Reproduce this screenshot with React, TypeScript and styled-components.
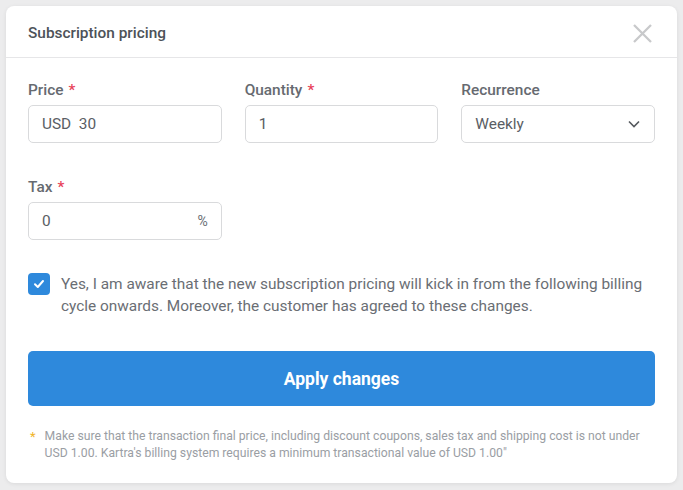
import * as React from 'react';
import styled, { createGlobalStyle } from 'styled-components';

const GlobalStyle = createGlobalStyle`
  html, body {
    margin: 0;
    padding: 0;
    background: #ececed;
    font-family: Roboto, "Liberation Sans", Arial, sans-serif;
  }
  * {
    box-sizing: border-box;
  }
`;

const Page = styled.div`
  width: 683px;
  height: 490px;
  padding: 6px;
`;

const Modal = styled.div`
  width: 671px;
  height: 477px;
  background: #fff;
  border-radius: 8px;
  box-shadow: 0 1px 4px rgba(0, 0, 0, 0.08);
  display: flex;
  flex-direction: column;
`;

const Header = styled.div`
  height: 52px;
  padding: 3px 22px 0;
  display: flex;
  align-items: center;
  justify-content: space-between;
  border-bottom: 1px solid #e6e6e8;
`;

const Title = styled.h2`
  margin: 0;
  font-size: 15.4px;
  font-weight: 500;
  color: #4d5258;
`;

const CloseButton = styled.button`
  border: 0;
  background: none;
  padding: 0;
  width: 19px;
  height: 19px;
  margin-right: 3px;
  color: #c8c9cb;
  cursor: pointer;
  display: flex;
  align-items: center;
  justify-content: center;
`;

const Body = styled.div`
  padding: 23px 22px 0;
`;

const Grid = styled.div`
  display: grid;
  grid-template-columns: repeat(3, 1fr);
  column-gap: 23px;
  row-gap: 35px;
`;

const Field = styled.div`
  display: flex;
  flex-direction: column;
`;

const Label = styled.label`
  font-size: 15.4px;
  font-weight: 500;
  color: #666a70;
  height: 18px;
  line-height: 18px;
  margin-bottom: 6px;
`;

const Required = styled.span`
  color: #e8435a;
  margin-left: 5px;
`;

const InputBox = styled.div`
  height: 38px;
  border: 1px solid #d9dadc;
  border-radius: 5px;
  padding: 0 13px;
  display: flex;
  align-items: center;
  justify-content: space-between;
  font-size: 15.4px;
  color: #5a5e64;
`;

const Suffix = styled.span`
  color: #6a6e73;
  font-size: 14px;
`;

const Check = styled.label`
  display: flex;
  align-items: flex-start;
  gap: 11px;
  margin-top: 33px;
  font-size: 15.4px;
  line-height: 22px;
  color: #6a6e74;
`;

const Box = styled.span`
  flex: 0 0 22px;
  width: 22px;
  height: 22px;
  border-radius: 4px;
  background: #2e89dc;
  display: flex;
  align-items: center;
  justify-content: center;
`;

const ApplyButton = styled.button`
  width: 100%;
  height: 55px;
  margin-top: 34px;
  border: 0;
  border-radius: 5px;
  background: #2e89dc;
  color: #fff;
  font-family: inherit;
  font-size: 17.5px;
  font-weight: 700;
  cursor: pointer;
`;

const Note = styled.div`
  display: flex;
  gap: 9px;
  margin-top: 22px;
  font-size: 12.2px;
  line-height: 17px;
  color: #9a9ea4;
`;

const Star = styled.span`
  color: #f0b429;
  font-size: 13px;
  padding-left: 2px;
`;

export default function App() {
  return (
    <Page>
      <GlobalStyle />
      <Modal>
        <Header>
          <Title>Subscription pricing</Title>
          <CloseButton aria-label="Close">
            <svg width="19" height="19" viewBox="0 0 19 19" fill="none" stroke="currentColor" strokeWidth="2.3">
              <path d="M1 1 L18 18 M18 1 L1 18" />
            </svg>
          </CloseButton>
        </Header>
        <Body>
          <Grid>
            <Field>
              <Label>
                Price<Required>*</Required>
              </Label>
              <InputBox>USD&nbsp;&nbsp;30</InputBox>
            </Field>
            <Field>
              <Label>
                Quantity<Required>*</Required>
              </Label>
              <InputBox>1</InputBox>
            </Field>
            <Field>
              <Label>Recurrence</Label>
              <InputBox>
                Weekly
                <svg width="14" height="14" viewBox="0 0 14 14" fill="none" stroke="#55595e" strokeWidth="1.6">
                  <path d="M2 4.5 L7 9.5 L12 4.5" />
                </svg>
              </InputBox>
            </Field>
            <Field>
              <Label>
                Tax<Required>*</Required>
              </Label>
              <InputBox>
                0<Suffix>%</Suffix>
              </InputBox>
            </Field>
          </Grid>
          <Check>
            <Box>
              <svg width="12" height="12" viewBox="0 0 12 12" fill="none" stroke="#fff" strokeWidth="2" strokeLinecap="round" strokeLinejoin="round">
                <path d="M2 6.3 L4.8 9 L10 3" />
              </svg>
            </Box>
            <span>
              Yes, I am aware that the new subscription pricing will kick in from the following billing cycle onwards.
              Moreover, the customer has agreed to these changes.
            </span>
          </Check>
          <ApplyButton>Apply changes</ApplyButton>
          <Note>
            <Star>*</Star>
            <span>
              Make sure that the transaction final price, including discount coupons, sales tax and shipping cost is not
              under USD 1.00. Kartra's billing system requires a minimum transactional value of USD 1.00"
            </span>
          </Note>
        </Body>
      </Modal>
    </Page>
  );
}
